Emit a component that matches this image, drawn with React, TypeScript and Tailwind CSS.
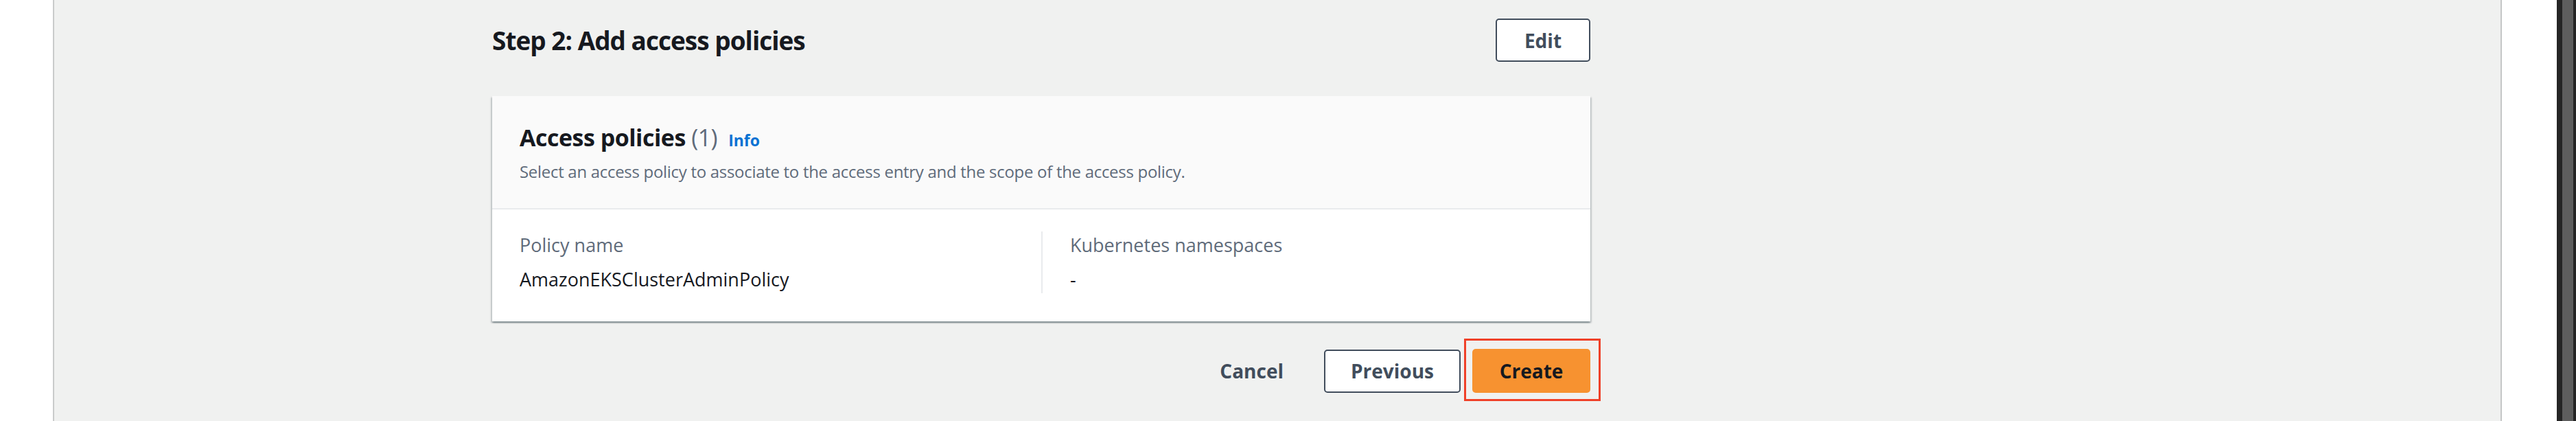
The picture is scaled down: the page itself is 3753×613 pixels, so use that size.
export default function App() {
  return (
    <div className="flex h-[613px] w-full overflow-hidden bg-white font-['Open_Sans','Liberation_Sans',sans-serif] text-[#16191f]">
      <div className="w-[77px] shrink-0 bg-white" />
      <div className="w-[2px] shrink-0 bg-[#c9cbcb]" />

      <main className="flex-1 bg-[#f0f1f0] pl-[638px] pt-[27px]">
        <div className="w-[1600px]">
          {/* step header */}
          <div className="flex h-[63px] items-center justify-between">
            <h2 className="text-[37px] font-bold leading-[48px] tracking-[-1px]">Step 2: Add access policies</h2>
            <button className="h-[63px] w-[138px] rounded-[5px] border-2 border-[#414d5c] bg-white text-[28px] font-bold text-[#414d5c]">
              Edit
            </button>
          </div>

          {/* access policies card */}
          <section className="mt-[50px] bg-white shadow-[0_2px_2px_0_rgba(0,28,36,0.3),2px_2px_2px_0_rgba(0,28,36,0.15),-2px_2px_2px_0_rgba(0,28,36,0.15)]">
            <header className="border-b-2 border-[#e9ebed] bg-[#fafafa] px-[40px] pb-[37px] pt-[38px]">
              <div className="flex items-baseline gap-[16px] leading-[44px]">
                <h3 className="text-[34px] font-bold tracking-[-0.5px]">
                  Access policies <span className="font-normal text-[#5f6b7a]">(1)</span>
                </h3>
                <a className="text-[23px] font-bold text-[#0972d3]">Info</a>
              </div>
              <p className="mt-[8px] text-[24px] leading-[32px] tracking-[-0.3px] text-[#5f6b7a]">
                Select an access policy to associate to the access entry and the scope of the access policy.
              </p>
            </header>

            <div className="grid grid-cols-2 px-[40px] pb-[41px] pt-[32px] text-[27px] leading-[40px]">
              <div className="flex flex-col gap-[10px]">
                <span className="text-[#5f6b7a]">Policy name</span>
                <span>AmazonEKSClusterAdminPolicy</span>
              </div>
              <div className="flex flex-col gap-[10px] border-l-2 border-[#e9ebed] pl-[40px]">
                <span className="text-[#5f6b7a]">Kubernetes namespaces</span>
                <span>-</span>
              </div>
            </div>
          </section>

          {/* wizard actions */}
          <div className="mt-[40px] flex items-center justify-end gap-[17px]">
            <button className="h-[63px] px-[42px] text-[28px] font-bold text-[#414d5c]">Cancel</button>
            <button className="h-[63px] w-[199px] rounded-[5px] border-2 border-[#414d5c] bg-white text-[28px] font-bold text-[#414d5c]">
              Previous
            </button>
            <div className="relative">
              <button className="h-[64px] w-[172px] rounded-[5px] bg-[#f79230] text-[28px] font-bold text-[#16191f]">
                Create
              </button>
              <span className="pointer-events-none absolute -bottom-[12px] -left-[12px] -right-[15px] -top-[15px] border-[3px] border-[#ef4129]" />
            </div>
          </div>
        </div>
      </main>

      <div className="w-[2px] shrink-0 bg-[#c4c6c6]" />
      <div className="w-[80px] shrink-0 bg-white" />
      <div className="w-[8px] shrink-0 bg-[#252525]" />
      <div className="w-[16px] shrink-0 bg-[#5e5e5e]" />
      <div className="w-[4px] shrink-0 bg-[#252525]" />
    </div>
  );
}
